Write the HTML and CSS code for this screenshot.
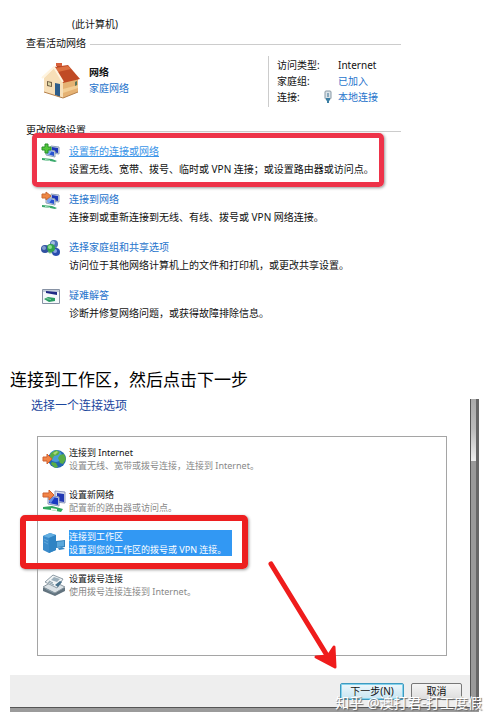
FILE: index.html
```html
<!DOCTYPE html>
<html lang="zh-CN">
<head>
    <meta charset="UTF-8">
    <meta name="viewport" content="width=device-width, initial-scale=1.0">
    <title>连接到工作区</title>
    <link rel="stylesheet" href="styles.css">
</head>
<body>
    <!-- Network center -->
    <section class="network-center">
        <div class="computer">(此计算机)</div>

        <h2 class="group-title">查看活动网络</h2>
        <div class="active-network">
            <svg class="house" viewBox="0 0 40 36">
                <path fill="#a83c1c" d="M16 1h5v7h-5z"/>
                <path fill="#d8603a" d="M15 0h6v3h-6z"/>
                <path fill="#f7dfb8" d="M3 15 13 5l9 14v16L3 29z"/>
                <path fill="#e5b273" d="m22 18 15-4v15l-15 6z"/>
                <path fill="#f2cd94" d="m22 26 15-4v3l-15 5z"/>
                <path fill="#c04a25" d="M13 4 27 2l12 14-17 4z"/>
                <path fill="#dc7040" d="m15 5 12-2 3 3-13 3z"/>
                <path fill="none" stroke="#fff4df" stroke-width="2" d="M1 15 13 4l9 15"/>
                <path fill="#2d5d8b" d="m14 20 5 1v13l-5-2z"/>
                <path fill="#756247" d="m6 18 5 1v5l-5-1z"/>
                <path fill="#ddd6a5" d="m7 19 3 1v3l-3-1z"/>
                <path fill="#57755a" d="m34 19 2-1v4l-2 1z"/>
                <path fill="none" stroke="#b57f49" d="m3 29 19 6 15-6"/>
            </svg>
            <div class="network-name">
                <strong>网络</strong>
                <a href="#">家庭网络</a>
            </div>
            <dl class="details">
                <dt>访问类型:</dt>
                <dd>Internet</dd>
                <dt>家庭组:</dt>
                <dd><a href="#">已加入</a></dd>
                <dt>连接:</dt>
                <dd>
                    <svg class="plug" viewBox="0 0 8 13">
                        <rect x="1" y="1" width="6" height="8" rx="1" fill="#dce4e9" stroke="#8798a5"/>
                        <path fill="#8ba9bd" d="M3 3h2v4H3z"/>
                        <path fill="#3c7fa4" d="M2 8h4v2L5 11v2H3v-2L2 10z"/>
                    </svg>
                    <a href="#">本地连接</a>
                </dd>
            </dl>
        </div>

        <h2 class="group-title">更改网络设置</h2>
        <div class="tasks">
            <div class="task marked">
                <svg class="task-icon" viewBox="0 0 20 20">
                    <path fill="#d4dce8" stroke="#8ea0b8" d="m10 3 8 1v7l-8-1z"/>
                    <path fill="#1c37b8" d="m11 4 6 1v5l-6-1z"/>
                    <path fill="#d4dce8" stroke="#8ea0b8" d="m5 6 9 2v6l-9-2z"/>
                    <path fill="#2753d1" d="m6 7 7 2v4L6 11z"/>
                    <path fill="#7fa8f0" d="m6 7 5 1-3 4-2-1z"/>
                    <path fill="#39a96b" d="m1 15 10 1 5 2-2 1-5-1-8-1z"/>
                    <path fill="#b8e3c8" d="m4 16 5 1v1l-5-1z"/>
                    <path fill="#53c63b" stroke="#28902a" d="M4 1h3v3h3v3H7v3H4V7H1V4h3z"/>
                </svg>
                <div class="task-text">
                    <a href="#" class="hovered">设置新的连接或网络</a>
                    <p>设置无线、宽带、拨号、临时或 VPN 连接；或设置路由器或访问点。</p>
                </div>
            </div>
            <div class="task">
                <svg class="task-icon" viewBox="0 0 20 20">
                    <path fill="#d4dce8" stroke="#8ea0b8" d="m10 3 8 1v7l-8-1z"/>
                    <path fill="#1c37b8" d="m11 4 6 1v5l-6-1z"/>
                    <path fill="#d4dce8" stroke="#8ea0b8" d="m5 6 9 2v6l-9-2z"/>
                    <path fill="#2753d1" d="m6 7 7 2v4L6 11z"/>
                    <path fill="#7fa8f0" d="m6 7 5 1-3 4-2-1z"/>
                    <path fill="#39a96b" d="m1 14 10 1 5 2-2 1-5-1-8-1z"/>
                    <path fill="#b8e3c8" d="m4 15 5 1v1l-5-1z"/>
                    <path fill="#ef8743" stroke="#c86a35" d="M1 3h4V1l5 4-5 4V7H1z"/>
                </svg>
                <div class="task-text">
                    <a href="#">连接到网络</a>
                    <p>连接到或重新连接到无线、有线、拨号或 VPN 网络连接。</p>
                </div>
            </div>
            <div class="task">
                <svg class="task-icon" viewBox="0 0 20 20">
                    <path stroke="#76b885" stroke-width="3" d="m4 9 8-4 4 7-7 1z" fill="none"/>
                    <circle cx="13" cy="5" r="4" fill="#4d73b8"/>
                    <circle cx="12" cy="4" r="2" fill="#a5bde4"/>
                    <circle cx="4" cy="10" r="4" fill="#3151a0"/>
                    <circle cx="3" cy="9" r="2" fill="#819dd0"/>
                    <circle cx="15" cy="13" r="4" fill="#294cae"/>
                    <circle cx="14" cy="12" r="2" fill="#87a5df"/>
                    <circle cx="10" cy="9" r="4" fill="#32a34c"/>
                    <circle cx="9" cy="8" r="2" fill="#8ddd90"/>
                </svg>
                <div class="task-text">
                    <a href="#">选择家庭组和共享选项</a>
                    <p>访问位于其他网络计算机上的文件和打印机，或更改共享设置。</p>
                </div>
            </div>
            <div class="task">
                <svg class="task-icon" viewBox="0 0 20 20">
                    <path fill="#f5f8fb" stroke="#8792a4" d="M1.500 2.500h17v14h-17z"/>
                    <path fill="#c4cedb" d="M2 3h16v2H2z"/>
                    <path fill="#202b85" d="m5 4 11 1v3L5 6z"/>
                    <path fill="#299b61" d="m3 12 4-2 7 1v3l-6 1z"/>
                    <path fill="#83cda1" d="m6 11 4 1v1l-5-1z"/>
                </svg>
                <div class="task-text">
                    <a href="#">疑难解答</a>
                    <p>诊断并修复网络问题，或获得故障排除信息。</p>
                </div>
            </div>
        </div>
    </section>

    <h1 class="step">连接到工作区，然后点击下一步</h1>

    <!-- Connection wizard -->
    <section class="wizard">
        <div class="wizard-main">
            <div class="wizard-body">
                <h2 class="wizard-title">选择一个连接选项</h2>
                <div class="options">
                    <button type="button" class="option">
                        <svg class="option-icon" viewBox="0 0 24 24">
                            <circle cx="15" cy="12" r="9" fill="#2467b1"/>
                            <circle cx="14" cy="9" r="6" fill="#4a9cda"/>
                            <path fill="#59ad45" d="m9 6 5-3 4 2-2 3-4 1-2 4-3-2zM18 8l4-1 2 5-3 5-3-1-2-5zM10 15l4 1 2 4-3 1-4-4z"/>
                            <path fill="#a7d976" d="m11 6 4-2 1 1-3 3z"/>
                            <path fill="#f28446" stroke="#ce6030" d="M1 10h4V7l5 5-5 5v-3H1z"/>
                        </svg>
                        <span class="option-text"><span>连接到 Internet</span><small>设置无线、宽带或拨号连接，连接到 Internet。</small></span>
                    </button>
                    <button type="button" class="option">
                        <svg class="option-icon" viewBox="0 0 24 24">
                            <path fill="#dbe1ef" stroke="#8d98bc" d="m13 2 10 1v11l-10-1z"/>
                            <path fill="#2339b3" d="m15 4 7 1v8l-7-1z"/>
                            <path fill="#dbe1ef" stroke="#8d98bc" d="m6 6 11 2v9L6 15z"/>
                            <path fill="#183ac1" d="m7 7 9 2v7l-9-2z"/>
                            <path fill="#688be2" d="m7 7 6 1-4 6-2-1z"/>
                            <path fill="#31a85d" d="m1 18 9-1 11 3-2 3-10-2-8-1z"/>
                            <path fill="#f0f7ef" d="m9 19 6 1v2l-6-1z"/>
                            <path fill="#f28446" stroke="#ce6030" d="M1 4h6V1l5 5-5 5V8H1z"/>
                        </svg>
                        <span class="option-text"><span>设置新网络</span><small>配置新的路由器或访问点。</small></span>
                    </button>
                    <button type="button" class="option selected">
                        <svg class="option-icon" viewBox="0 0 24 24">
                            <path fill="#3b8bcb" d="m1 5 7-3 6 2v15l-7 3-6-3z"/>
                            <path fill="#62aee1" d="m1 5 7-3 6 2-7 3z"/>
                            <path fill="#2f84c4" d="m7 7 7-3v15l-7 3z"/>
                            <path stroke="#5fa9dc" d="m2 8 4 2M2 11l4 2"/>
                            <path fill="#3483bd" d="m14 10 9-1v7l-9 1z"/>
                            <path fill="#5ba8dc" d="m15 11 7-1v5l-7 1z"/>
                            <path fill="#3586c4" d="m16 17 4-1 3 2-6 1z"/>
                        </svg>
                        <span class="option-text"><span>连接到工作区</span><small>设置到您的工作区的拨号或 VPN 连接。</small></span>
                    </button>
                    <button type="button" class="option">
                        <svg class="option-icon" viewBox="0 0 24 24">
                            <path fill="#63747f" d="m1 15 9-5 13 5v3l-10 5-12-5z"/>
                            <path fill="#dce3e7" stroke="#89969f" d="m1 14 10-6 12 6-10 6z"/>
                            <path fill="#f1f4f5" stroke="#8d9ba5" d="m3 9 8-7 10 4-6 9z"/>
                            <path fill="#9cafbb" d="m9 7 3-3 6 2-3 3z"/>
                            <path fill="#48718a" d="m13 12 5-4 2 1-4 5z"/>
                            <path fill="none" stroke="#8299a5" d="m6 9 6 3M7 8l4 2M4 16l8 4"/>
                        </svg>
                        <span class="option-text"><span>设置拨号连接</span><small>使用拨号连接连接到 Internet。</small></span>
                    </button>
                </div>
                <svg class="arrow" viewBox="0 0 70 112">
                    <path fill="none" stroke="#ef1c1c" stroke-width="5" stroke-linecap="round" d="m4 5 57 93"/>
                    <path fill="#ef1c1c" stroke="#ef1c1c" stroke-width="3" stroke-linejoin="round" d="m67 88 1 20-19-10 12-1z"/>
                </svg>
            </div>
            <div class="wizard-footer">
                <button type="button" class="btn btn-next">下一步(N)</button>
                <button type="button" class="btn">取消</button>
            </div>
        </div>
        <div class="wizard-edge"></div>
        <div class="watermark">知乎 @澳打君-打工度假</div>
    </section>
</body>
</html>
```
FILE: styles.css
```css
*,
*::before,
*::after {
    box-sizing: border-box;
}

body {
    margin: 0;
    padding: 17px 0 9px;
    background: #fff;
    color: #111;
    font-family: "Noto Sans", "Noto Sans CJK SC", sans-serif;
    font-size: 10px;
    line-height: 16px;
}

h1, h2, p, dl, dd {
    margin: 0;
    font-weight: normal;
}

a {
    color: #1f74cc;
    text-decoration: none;
}

svg {
    display: block;
    flex: none;
}

/* Network center */
.network-center {
    margin: 0 94px 0 26px;
}

.computer {
    padding-left: 46px;
    line-height: 14px;
}

.group-title {
    display: flex;
    align-items: center;
    gap: 4px;
    padding-top: 4px;
    font-size: 10px;
}

.group-title::after {
    content: "";
    flex: 1;
    height: 1px;
    margin-top: 2px;
    background: #ccc;
}

.active-network {
    display: flex;
    padding: 5px 0 11px 15px;
}

.house {
    width: 40px;
    height: 36px;
    margin-top: 7px;
}

.network-name {
    display: flex;
    flex: 1;
    flex-direction: column;
    padding: 8px 0 0 8px;
}

.details {
    display: grid;
    grid-template-columns: 61px 63px;
    padding: 1px 0 2px 8px;
    border-left: 1px solid #ccc;
}

.details dd {
    position: relative;
}

.plug {
    position: absolute;
    top: 1px;
    left: -14px;
    width: 8px;
    height: 13px;
}

.tasks {
    display: flex;
    flex-direction: column;
    gap: 14px;
    padding-top: 5px;
}

.task {
    position: relative;
    display: flex;
    gap: 8px;
    padding-left: 15px;
}

.task-icon {
    width: 20px;
    height: 20px;
}

.task-text p {
    padding-top: 2px;
    white-space: nowrap;
}

.task-text a {
    display: inline-block;
    vertical-align: top;
}

.task-text .hovered {
    color: #3b95e8;
    text-decoration: underline;
}

/* Red outline round the item to click */
.marked::after {
    content: "";
    position: absolute;
    inset: -10px 17px -10px 6px;
    border: 5px solid #ee3349;
    border-radius: 5px;
    box-shadow: 1px 1px 3px #999;
    pointer-events: none;
}

.step {
    margin: 47px 10px 7px;
    color: #000;
    font-size: 17px;
    line-height: 24px;
}

/* Wizard */
.wizard {
    position: relative;
    display: grid;
    grid-template-columns: 1fr 9px;
    margin: 0 16px 0 10px;
    border-bottom: 4px solid #9b9b9b;
}

.wizard-edge {
    border-left: 1px solid #555;
    border-right: 3px solid #666;
    background: linear-gradient(#aaa, #bbb 30px, #eee 62px, #999 62px);
}

.wizard-body {
    position: relative;
    padding: 0 23px 19px 21px;
}

.wizard-title {
    padding-bottom: 23px;
    color: #1b469d;
    font-size: 12px;
    line-height: 14px;
}

.options {
    display: flex;
    flex-direction: column;
    gap: 16px;
    min-height: 220px;
    margin-left: 6px;
    padding: 9px 4px;
    border: 1px solid #a5a5a5;
}

.option {
    position: relative;
    display: flex;
    align-items: center;
    gap: 3px;
    padding: 0;
    border: 0;
    background: none;
    color: #111;
    font: inherit;
    font-size: 9px;
    line-height: 13px;
    text-align: left;
}

.option-icon {
    width: 24px;
    height: 24px;
}

.option-text {
    display: flex;
    flex-direction: column;
    padding-right: 6px;
}

.option small {
    color: #888;
    font-size: 9px;
}

.selected .option-text {
    background: #3298f3;
    color: #fff;
}

.selected small {
    color: #fff;
}

.selected::after {
    content: "";
    position: absolute;
    top: -15px;
    left: -22px;
    width: 228px;
    height: 54px;
    border: 6px solid #ed1f20;
    border-radius: 5px;
    box-shadow: 1px 1px 3px #999;
    pointer-events: none;
}

.arrow {
    position: absolute;
    right: 133px;
    bottom: 4px;
    width: 70px;
    height: 112px;
}

.wizard-footer {
    display: flex;
    justify-content: flex-end;
    gap: 7px;
    padding: 8px 8px 7px;
    border-bottom: 1px solid #555;
    background: #eee;
}

.btn {
    width: 51px;
    height: 17px;
    padding: 0;
    border: 1px solid #777;
    border-radius: 2px;
    background: linear-gradient(#f5f5f5, #ddd);
    color: #111;
    font: inherit;
    line-height: 15px;
}

.btn-next {
    width: 64px;
    border-color: #3d9ac0;
    background: linear-gradient(#eef7fb, #c7e5f2);
    box-shadow: inset 0 0 0 1px #86d2ec;
}

.watermark {
    position: absolute;
    right: -3px;
    bottom: -4px;
    color: #fff;
    font-size: 14px;
    line-height: 18px;
    text-shadow: 1px 1px 1px #666;
    white-space: nowrap;
}
```
